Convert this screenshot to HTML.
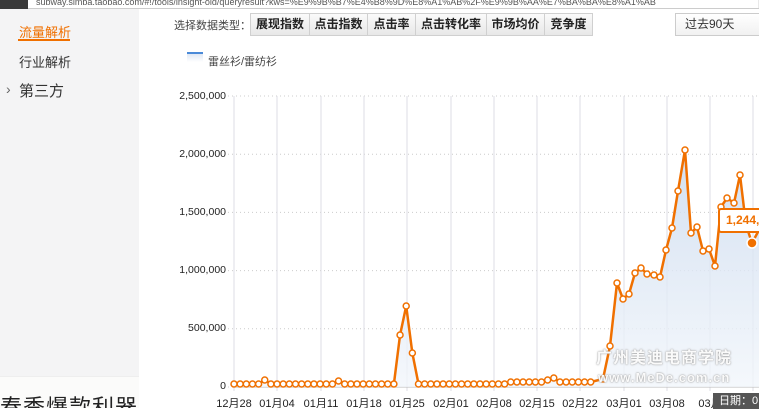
<!DOCTYPE html>
<html><head><meta charset="utf-8"><style>
*{margin:0;padding:0;box-sizing:border-box}
body{width:759px;height:408px;overflow:hidden;background:#fff;font-family:"Liberation Sans","Noto Sans CJK SC",sans-serif;position:relative}
.url{position:absolute;left:0;top:0;width:759px;height:9px;background:#e9e9e9;border-bottom:1px solid #ccc}
.url .box{position:absolute;left:28px;top:-3px;width:730px;height:11px;background:#fff;font-size:9px;color:#555;white-space:nowrap;overflow:hidden;line-height:11px;padding-left:8px}
.url .dark{position:absolute;left:0;top:0;width:28px;height:9px;background:#3a3a3a}
.side{position:absolute;left:0;top:9px;width:139px;height:399px;background:#f4f4f5;overflow:hidden}
.side div{position:absolute;left:19px;font-size:13px;color:#333}
.tabs{position:absolute;left:250px;top:13px;height:23px;display:flex;border:1px solid #d0d0d0;background:linear-gradient(#fafafa,#e8e8e8)}
.tabs span{font-size:12px;font-weight:bold;color:#222;line-height:21px;text-align:center;border-right:1px solid #d0d0d0}
.tabs span:last-child{border-right:none}
.sel{position:absolute;left:675px;top:13px;width:90px;height:23px;border:1px solid #ccc;background:linear-gradient(#fff,#f1f1f1);font-size:12px;color:#333;line-height:21px;padding-left:9px}
.yl{position:absolute;right:533px;font-size:10.5px;color:#222;text-align:right}
.wm{position:absolute;color:rgba(255,255,255,.95);letter-spacing:1px;text-shadow:0 0 1px #999,0 0 2px #aaa;font-weight:bold}
</style></head><body>
<div class="url"><div class="dark"></div><div class="box">subway.simba.taobao.com/#!/tools/insight-old/queryresult?kws=%E9%9B%B7%E4%B8%9D%E8%A1%AB%2F%E9%9B%AA%E7%BA%BA%E8%A1%AB</div></div>
<div class="side">
<div style="top:13px;color:#f07000;font-size:13px">流量解析</div>
<div style="top:30px;left:18px;width:52px;height:2px;background:#f07000"></div>
<div style="top:43px">行业解析</div>
<div style="top:72px;left:6px;font-size:14px;color:#666">›</div>
<div style="top:71px;font-size:15px">第三方</div>
<div style="top:367px;left:0;width:139px;height:40px;background:#fbfbfa;border-top:1px solid #eee"></div>
<div style="top:381px;left:0;font-size:22px;color:#222;letter-spacing:1px;white-space:nowrap">春季爆款利器</div>
</div>
<div style="position:absolute;left:174px;top:17px;font-size:11px;color:#444">选择数据类型：</div>
<div class="tabs"><span style="width:59px">展现指数</span><span style="width:58px">点击指数</span><span style="width:48px">点击率</span><span style="width:71px">点击转化率</span><span style="width:58px">市场均价</span><span style="width:47px">竞争度</span></div>
<div class="sel">过去90天</div>
<div style="position:absolute;left:187px;top:52px;width:16px;height:10px;background:linear-gradient(#dfe8f4,#fff);border-top:2px solid #4a8ad8"></div>
<div style="position:absolute;left:208px;top:53px;font-size:11px;color:#444">雷丝衫/雷纺衫</div>
<div class="yl" style="top:90px">2,500,000</div>
<div class="yl" style="top:148px">2,000,000</div>
<div class="yl" style="top:206px">1,500,000</div>
<div class="yl" style="top:264px">1,000,000</div>
<div class="yl" style="top:322px">500,000</div>
<div class="yl" style="top:380px">0</div>
<svg id="c" width="759" height="408" style="position:absolute;left:0;top:0"></svg>
<div class="wm" style="left:596px;top:344px;font-size:16px">广州美迪电商学院</div>
<div class="wm" style="left:598px;top:370px;font-size:13px">www.MeDe.com.cn</div>
<div style="position:absolute;left:718px;top:208px;width:50px;height:25px;background:#fff;border:2px solid #f07000;border-radius:3px;font-size:12px;font-weight:bold;color:#f07000;line-height:21px;padding-left:6px">1,244,</div>
<div style="position:absolute;left:713px;top:393px;width:50px;height:16px;background:#555;color:#fff;font-size:11px;line-height:16px;padding-left:6px">日期：0</div>
<script>
var s='',L=['12月28','01月04','01月11','01月18','01月25','02月01','02月08','02月15','02月22','03月01','03月08','03月'],gx=[234,277,321,364,407,451,494,537,580,624,667,710,753];
for(var i=0;i<6;i++){var y=96+i*58.2;s+='<line x1="228" x2="759" y1="'+y+'" y2="'+y+'" stroke="#ccc" stroke-dasharray="1,3"/>';}
for(i=0;i<gx.length;i++)s+='<line x1="'+gx[i]+'" x2="'+gx[i]+'" y1="96" y2="391" stroke="#dedee4"/>';
s+='<line x1="234" x2="759" y1="387" y2="387" stroke="#bbb"/>';
var p=[];
for(i=0;i<59;i++){var y=384;if(i==5)y=380;if(i==17)y=381;if(i==27)y=335;if(i==28)y=306;if(i==29)y=353;if(i>=45)y=382;if(i==51)y=380;if(i==52)y=378;p.push([234+i*6.15,y]);}
var late=[[603,379],[610,346],[617,283],[623,299],[629,294],[635,273],[641,268],[647,274],[654,275],[660,277],[666,250],[672,228],[678,191],[685,150],[691,233],[697,227],[703,251],[709,249],[715,266],[721,207],[727,198],[734,203],[740,175],[746,225],[752,243],[759,230]];
p=p.concat(late);
var pts=p.map(function(a){return a[0]+','+a[1]}).join(' ');
s+='<defs><linearGradient id="g" x1="0" y1="0" x2="0" y2="1"><stop offset="0" stop-color="#c9d9ee"/><stop offset="1" stop-color="#f2f6fb"/></linearGradient></defs>';
s+='<polygon points="234,387 '+pts+' 759,387" fill="url(#g)" opacity=".8"/>';
s+='<polyline points="'+pts+'" fill="none" stroke="#f07000" stroke-width="2.5" stroke-linejoin="round"/>';
p.forEach(function(a,k){if(k<p.length-2)s+='<circle cx="'+a[0]+'" cy="'+a[1]+'" r="3" fill="#fff" stroke="#f07000" stroke-width="1.5"/>';});
s+='<circle cx="752" cy="243" r="5" fill="#f07000" stroke="#fff" stroke-width="1.5"/>';
for(i=0;i<L.length;i++)s+='<text x="'+gx[i]+'" y="407" font-size="11" text-anchor="middle" fill="#222" font-family="Liberation Sans,Noto Sans CJK SC,sans-serif">'+L[i]+'</text>';
document.getElementById('c').innerHTML=s;
</script>
</body></html>
